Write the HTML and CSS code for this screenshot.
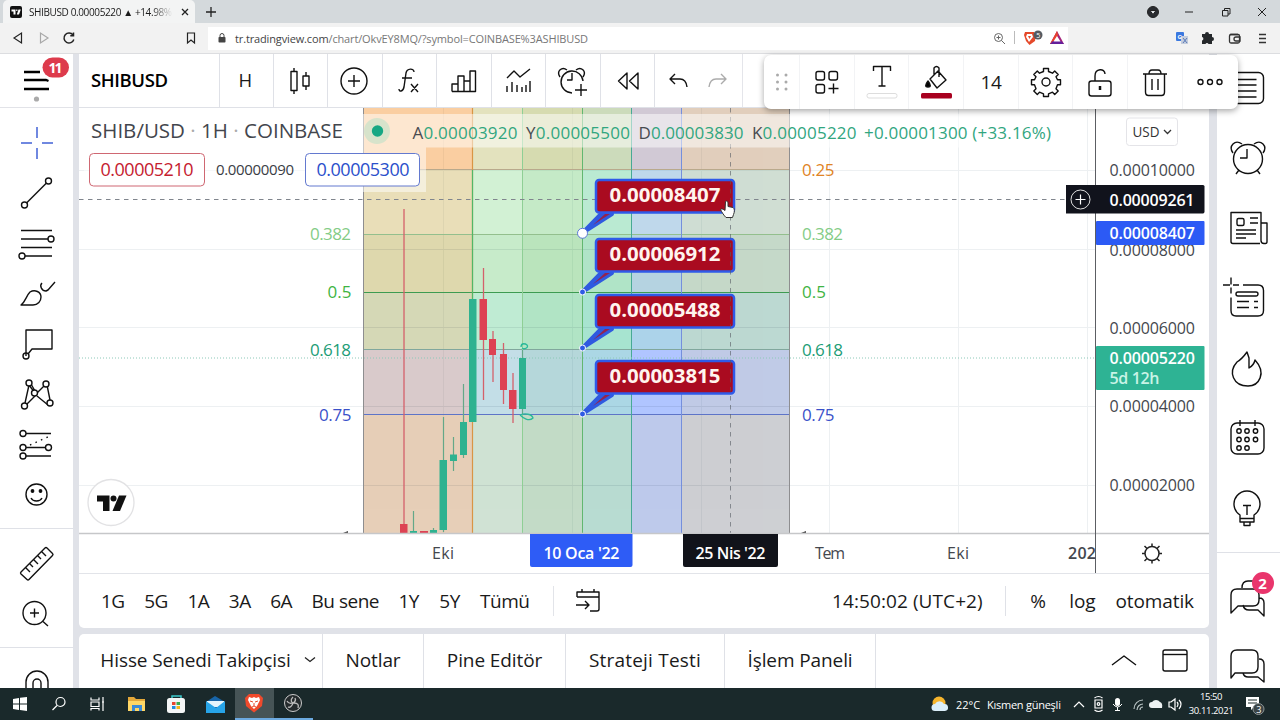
FILE: index.html
```html
<!DOCTYPE html>
<html lang="tr">
<head>
  <meta charset="UTF-8">
  <meta name="viewport" content="width=device-width, initial-scale=1.0">
  <title>SHIBUSD 0.00005220 ▲ +14.98%</title>
  <link rel="stylesheet" href="styles.css">
</head>
<body>
  <div class="tab-strip">
    <div class="tab">
      <svg class="favicon" viewBox="0 0 12 12"><rect width="12" height="12" rx="2" fill="#111"/><path fill="#fff" d="M1.5 3.5h4v5h-2v-3h-2zM6.200 3.500h1.200v1.600H6.200zM8.500 3.500h2.300L9 8.500H6.800z"/></svg>
      <span class="tab-title">SHIBUSD 0.00005220 ▲ +14.98%</span>
      <svg class="tab-close" viewBox="0 0 8 8"><path d="M1 1l6 6M7 1L1 7" stroke="#222" stroke-width="1.300"/></svg>
    </div>
    <svg class="new-tab" viewBox="0 0 10 10"><path d="M5 0v10M0 5h10" stroke="#222" stroke-width="1.300"/></svg>
    <div class="window-buttons">
      <svg viewBox="-10 -10 20 20"><circle r="5.500" fill="#292c30"/><path d="M-3-1.500h6L0 2.500z" fill="#dfe3e6"/></svg>
      <svg viewBox="-10 -10 20 20"><path d="M-4 0h8"/></svg>
      <svg viewBox="-10 -10 20 20"><path d="M-3.500-1.500h5.500v5.500h-5.500zM-1.500-1.500v-2h5.500v5.500h-2"/></svg>
      <svg viewBox="-10 -10 20 20"><path d="M-4-4l8 8M4-4l-8 8"/></svg>
    </div>
  </div>

  <div class="address-row">
    <svg class="nav-icon" viewBox="-8 -8 16 16"><path d="M3.500-5v10L-4 0z"/></svg>
    <svg class="nav-icon faded" viewBox="-8 -8 16 16"><path d="M-3.500-5v10L4 0z"/></svg>
    <svg class="nav-icon" viewBox="-8 -8 16 16"><path d="M4-3A5 5 0 1 0 4.800 1.500M4.500-5.500v3.200H1.300" stroke-width="1.500"/></svg>
    <svg class="nav-icon bookmark" viewBox="-8 -8 16 16"><path d="M-3.500-5h7V5L0 2-3.500 5z"/></svg>
    <div class="url-box">
      <svg class="lock" viewBox="0 0 8 10"><path d="M2 4V2.500a2 2 0 0 1 4 0V4" fill="none" stroke="#444"/><rect x=".5" y="4" width="7" height="5.500" rx=".8" fill="#444"/></svg>
      <span class="url">tr.tradingview.com<i>/chart/OkvEY8MQ/?symbol=COINBASE%3ASHIBUSD</i></span>
      <svg class="url-icons" viewBox="988 28 80 20">
        <g fill="none" stroke="#666"><circle cx="998.500" cy="37.500" r="4"/><path d="M1001.500 40.500l3.500 3.500M996.500 37.500h4M998.500 35.500v4"/><path d="M1014.500 31v13" stroke="#bbb"/></g>
        <path d="M1025 32h9l2 3-1 6-5.500 4-3.500-4-2-6z" fill="#e5492a"/><path d="M1027 34h5l1 3-4 5-3-5z" fill="#fff"/><path d="M1028 36l1.500 3 1.500-3z" fill="#e5492a"/>
        <circle cx="1038" cy="35" r="4.500" fill="#555b61"/><text x="1036.200" y="37.800" class="shield-count">5</text>
        <path d="M1057 31l7 13h-14z" fill="#a3237a"/><path d="M1057 31l-7 13h4l4-9z" fill="#e9422d"/><path d="M1050 44l3-3h8l3 3z" fill="#64209b"/><path d="M1057 36l3.500 5.500h-7z" fill="#fff"/>
      </svg>
    </div>
    <svg class="ext-icons" viewBox="1170 28 110 20">
      <rect x="1176" y="32" width="8" height="9" rx="1" fill="#3b79e0"/><rect x="1181" y="36" width="7" height="8" fill="#c4cddd"/><path d="M1183 38l4 5M1187 38l-4 5" stroke="#5979b8"/><text x="1177.500" y="39" class="translate-g">G</text>
      <path d="M1202 34h3a2 2 0 0 1 4 0h3v3a2 2 0 0 1 0 4v3h-3.500a1.600 1.600 0 0 0-3 0H1202v-3.500a1.800 1.800 0 0 0 0-3.500z" fill="#26292c"/>
      <g fill="none" stroke="#333" stroke-width="1.300"><rect x="1229.500" y="34.500" width="10" height="8.500" rx="1.500"/><path d="M1230 34.500h8M1240 37h-4a1.800 1.800 0 0 0 0 4h4z"/><path d="M1259 34.500h7M1259 38.500h7M1259 42.500h7"/></g>
    </svg>
  </div>

  <div class="workspace">
    <div class="left-bar">
      <div class="menu-cell">
        <svg viewBox="0 54 73 53">
          <path d="M24 72h16M24 80h22l2.500 1M24 89h25" fill="none" stroke="#000" stroke-width="2.300"/>
          <rect x="42.500" y="57.500" width="26.500" height="20" rx="10" fill="#dd3b4c"/>
          <text x="48.500" y="73" textLength="14" class="menu-count">11</text>
          <circle cx="36.500" cy="99" r="2.600" fill="#aaa"/>
        </svg>
      </div>
      <div class="tools">
        <svg class="icon" viewBox="-20 -20 40 40"><path d="M0-16v11M0 5v11M-16 0h11M5 0h11" stroke="#4261d6" stroke-width="1.500"/></svg>
        <svg class="icon" viewBox="-20 -20 40 40"><path d="M-10.500 10L9.500-10"/><circle cx="-12.500" cy="12" r="3"/><circle cx="11.500" cy="-12" r="3"/></svg>
        <svg class="icon" viewBox="-20 -20 40 40"><path d="M-16-13.500h31M-16-5H11M-16 3.500h31M-12 12h27"/><circle cx="14" cy="-5" r="3"/><circle cx="-15" cy="12" r="3"/></svg>
        <svg class="icon" viewBox="-20 -20 40 40"><path d="M-16 11c5-4 5-9 9-13 5-3 11 0 11 5 0 4-3 8-8 8zM5-11c-3 3 0 8 4 8l2-1 7-8"/></svg>
        <svg class="icon" viewBox="-20 -20 40 40"><path d="M-11 12v-26h26v19H-5l-4 5"/><circle cx="-11" cy="12" r="3"/></svg>
        <svg class="icon" viewBox="-20 -20 40 40"><path d="M-12 9l4-18M-8-9l6 8M7-8L0-1M10-9l3 15M-2 2l-9 9M0 2l11 9M-6-10l4 7"/><g fill="#fff"><circle cx="-8" cy="-11" r="3"/><circle cx="9" cy="-10" r="3"/><circle cx="-2.500" cy="-1" r="3"/><circle cx="-12.500" cy="12" r="3"/><circle cx="13" cy="9" r="3"/></g></svg>
        <svg class="icon" viewBox="-20 -20 40 40"><path d="M-11-11.500h25M-11 2.500h20M-11 11h25"/><path d="M-7 0L13-9" stroke-dasharray="1.500 4.500"/><circle cx="-14" cy="-11.500" r="3"/><circle cx="-14" cy="2.500" r="3"/><circle cx="-14" cy="11" r="3"/><circle cx="11.500" cy="2.500" r="3"/></svg>
        <svg class="icon" viewBox="-20 -20 40 40"><circle cx="-.5" cy="-.5" r="10.500"/><path d="M-6 3c2 4 9 4 11 0"/><circle cx="-4.500" cy="-4" r="1.200" fill="#000"/><circle cx="3.500" cy="-4" r="1.200" fill="#000"/></svg>
      </div>
      <div class="tools tools-measure">
        <svg class="icon" viewBox="-20 -20 40 40"><path d="M-16 8L8-16q1-1 2 0l5.500 5.500q1 1 0 2L-8 15.500q-1 1-2 0L-16 10q-1-1 0-2zM-11 4l4 4M-7 0l3 3M-3-4l4 4M1-8l3 3M5-12l4 4"/></svg>
        <svg class="icon" viewBox="-20 -20 40 40"><circle cx="-2.500" cy="-1" r="11.500"/><path d="M-7-1h9M-2.500-5.500v9M6 7.500l5 4.500"/></svg>
      </div>
      <div class="tools tools-magnet">
        <svg class="icon" viewBox="-20 -20 40 40"><path d="M-11 20V-1a11 11 0 0 1 22 0v21M-4 20V0a4 4 0 0 1 8 0v20"/></svg>
      </div>
    </div>

    <div class="center">
      <div class="top-panel">
        <div class="top-bar">
          <div class="symbol">SHIBUSD</div>
          <div class="cell interval">H</div>
          <div class="cell"><svg class="icon" viewBox="-20 -20 40 40"><path d="M-9-9.500h6v19h-6zM-6-13v3M-6 10v3M3-5h6v10H3zM6-9v4M6 5v4"/></svg></div>
          <div class="cell"><svg class="icon" viewBox="-19 -20 40 40"><circle r="13"/><path d="M-6 0H6M0-6V6"/></svg></div>
          <div class="cell"><svg class="icon" viewBox="-20 -20 40 40"><path d="M5-9c0-4-7-4-8 1L-5 6c-1 5-5 5-5 2M-7-3H3M2 3l7 8M9 3l-7 8"/></svg></div>
          <div class="cell"><svg class="icon" viewBox="-20 -20 40 40"><path d="M-12 10.500V3h6v7.500M-6 3V-5H0v15.500M0 0h6M6 10.500V-10h5.500v20.500zM-12 10.500h23"/></svg></div>
          <div class="cell"><svg class="icon" viewBox="-20 -20 40 40"><path d="M-11-3l7-7 6 6 10-8M-11 5v6M-6 1v10M-1 4v7M4 6v5M8 4v7M12 0v11"/></svg></div>
          <div class="cell"><svg class="icon" viewBox="-19 -20 40 40"><path d="M0 12A11 11 0 1 1 11 0M-12-4c-4-6 2-11 7-7M11-4c4-6-2-11-7-7M0-8v7h-5M9 3v12M3 9h12"/></svg></div>
          <div class="cell"><svg class="icon" viewBox="-21 -20 40 40"><path d="M-1-8v16l-8.500-8zM10-8v16L1.500 0z"/></svg></div>
          <div class="cell undo-cell">
            <svg class="icon" viewBox="-19 -20 40 40"><path d="M-3-7l-5 5 5 5M-8-2H2q6 0 7 8"/></svg>
            <svg class="icon faded" viewBox="-19 -20 40 40"><path d="M3-7l5 5-5 5M8-2H-2q-6 0-7 8"/></svg>
          </div>
        </div>

        <svg class="chart" viewBox="79 108 1130 465">
          <!-- grid -->
          <path d="M79 170.500h1016M79 249.500h1016M79 327.500h1016M79 406.500h1016M79 485.500h1016M443.500 108v425M572.500 108v425M701.500 108v425M829.500 108v425M958.500 108v425M1087.500 108v425" stroke="#edf0f2"/>

          <!-- fibonacci price rows -->
          <g opacity=".2">
            <path fill="#f57c00" d="M363 108h427v61.500H363z"/>
            <path fill="#85db8d" d="M363 169.500h427V234H363z"/>
            <path fill="#44b84a" d="M363 234h427v58H363z"/>
            <path fill="#10b981" d="M363 292h427v57.500H363z"/>
            <path fill="#2962ff" d="M363 349.500h427v65H363z"/>
            <path fill="#787b86" d="M363 414.500h427V533H363z"/>
          </g>
          <!-- fibonacci time columns -->
          <g opacity=".2">
            <path fill="#f57c00" d="M363 108h109.500v425H363z"/>
            <path fill="#85db8d" d="M472.500 108h50v425h-50z"/>
            <path fill="#44b84a" d="M522.500 108h60v425h-60z"/>
            <path fill="#10b981" d="M582.500 108h49v425h-49z"/>
            <path fill="#2962ff" d="M631.500 108H681v425h-49.500z"/>
            <path fill="#787b86" d="M681 108h109v425H681z"/>
          </g>
          <path d="M363 249.500h427M363 327.500h427M363 406.500h427M363 485.500h427" stroke="#667" opacity=".06"/>
          <g fill="none" stroke-width="1">
            <path d="M363 169.500h427" stroke="#b9a98c"/>
            <path d="M363 234.500h427" stroke="#93bf8d"/>
            <path d="M363 292.500h427" stroke="#3d9b51"/>
            <path d="M363 349.500h427" stroke="#81a79d"/>
            <path d="M363 414.500h427" stroke="#5d74c8"/>
            <path d="M363.500 108v425M789.500 108v425" stroke="#8e8e90"/>
            <path d="M472.500 108v425" stroke="#d99545" stroke-width="1.200"/>
            <path d="M472.500 170v129" stroke="#51b767" stroke-width="1.200"/>
            <path d="M522.500 108v425" stroke="#8fcf95"/>
            <path d="M582.500 108v425" stroke="#62b770"/>
            <path d="M631.500 108v425" stroke="#48a995"/>
            <path d="M681.500 108v425" stroke="#758fdc"/>
          </g>

          <path d="M79 358h1016" stroke="#8cc9b8" stroke-dasharray="1 2"/>
          <path d="M79 199.500h987" stroke="#80858d" stroke-dasharray="4.500 4.500"/>

          <!-- candles -->
          <path d="M404 209v325M483.500 268v132M493 331v51M503.500 343v61M513 373v50" stroke="#d4606b" stroke-width="1.300"/>
          <path d="M413.500 511v22M433.500 528v5M443.500 417v115M453.500 437v34M463.500 384v74M522.500 350v64" stroke="#64a888" stroke-width="1.200"/>
          <path fill="#dd4253" d="M400 524h7.500v10H400zM420 531h8v3h-8zM479.500 299h7.500v41h-7.500zM489 339h7v16h-7zM500 354h7v36h-7zM509 390h7.500v19H509z"/>
          <path fill="#2eb290" d="M410 531h7v3h-7zM430 530h7v4h-7zM439.500 460h7.500v70h-7.500zM450 454.500h7v6.500h-7zM460 422h7v33h-7zM469 299h7.500v123H469zM519 358h7v51h-7z"/>
          <path d="M521 347c0-5 5-3 6-2 2 2-2 5-5 3M520 415c5-2 12-1 13 3-4 4-10 0-13-3" fill="none" stroke="#2ab99a" stroke-width="1.300"/>

          <!-- price callouts -->
          <g class="callout">
            <path class="tail" d="M583 232.500L601 214h11z"/><path d="M593 225l12-11h5z" fill="#94234f"/>
            <rect x="596" y="180" width="138" height="32.500" rx="3"/><text x="609.500" y="201.500" textLength="111" lengthAdjust="spacingAndGlyphs">0.00008407</text>
            <circle cx="582.500" cy="233.300" r="5" fill="#fff" stroke="#5c78d8"/>
          </g>
          <g class="callout">
            <path class="tail" d="M583 291.500L601 273h11z"/><path d="M593 284l12-11h5z" fill="#94234f"/>
            <rect x="596" y="239" width="138" height="32.500" rx="3"/><text x="609.500" y="260.500" textLength="111" lengthAdjust="spacingAndGlyphs">0.00006912</text>
            <circle cx="582.500" cy="292" r="3" fill="#2f5be4" stroke="#fff"/>
          </g>
          <g class="callout">
            <path class="tail" d="M583 347.500L601 329h11z"/><path d="M593 340l12-11h5z" fill="#94234f"/>
            <rect x="596" y="295" width="138" height="32.500" rx="3"/><text x="609.500" y="316.500" textLength="111" lengthAdjust="spacingAndGlyphs">0.00005488</text>
            <circle cx="582.500" cy="348" r="3" fill="#2f5be4" stroke="#fff"/>
          </g>
          <g class="callout">
            <path class="tail" d="M583 413.500L601 395h11z"/><path d="M593 406l12-11h5z" fill="#94234f"/>
            <rect x="596" y="361" width="138" height="32.500" rx="3"/><text x="609.500" y="382.500" textLength="111" lengthAdjust="spacingAndGlyphs">0.00003815</text>
            <circle cx="582.500" cy="414" r="3" fill="#2f5be4" stroke="#fff"/>
          </g>
          <path d="M730.500 108v425" stroke="#555b62" stroke-dasharray="4.500 4.500" opacity=".6"/>

          <!-- level names -->
          <g class="levels">
            <text x="310" y="240" textLength="41" fill="#84cc86">0.382</text><text x="802" y="240" textLength="41" fill="#84cc86">0.382</text>
            <text x="327.500" y="298" textLength="24" fill="#3fb443">0.5</text><text x="802" y="298" textLength="24" fill="#3fb443">0.5</text>
            <text x="310" y="356" textLength="41" fill="#219d76">0.618</text><text x="802" y="356" textLength="41" fill="#219d76">0.618</text>
            <text x="319" y="420.500" textLength="32.500" fill="#3a51c9">0.75</text><text x="802" y="420.500" textLength="32.500" fill="#3a51c9">0.75</text>
            <text x="802" y="175.500" textLength="32.500" fill="#e08425">0.25</text>
          </g>

          <!-- legend -->
          <path d="M84 114h970v33.500H426V192H84z" fill="#fff" opacity=".5"/>
          <text x="91" y="138" textLength="252" lengthAdjust="spacingAndGlyphs" class="legend-title">SHIB/USD <tspan fill="#aaa">·</tspan> 1H <tspan fill="#aaa">·</tspan> COINBASE</text>
          <circle cx="377" cy="131" r="13" fill="#d7e3cb"/><circle cx="377.500" cy="131" r="5.700" fill="#15a783"/>
          <g class="ohlc">
            <text x="412.500" y="139" textLength="105">A<tspan>0.00003920</tspan></text>
            <text x="526" y="139" textLength="104">Y<tspan>0.00005500</tspan></text>
            <text x="638.500" y="139" textLength="105">D<tspan>0.00003830</tspan></text>
            <text x="752" y="139" textLength="104.500">K<tspan>0.00005220</tspan></text>
            <text x="864" y="139" textLength="187"><tspan>+0.00001300 (+33.16%)</tspan></text>
          </g>
          <rect x="89.500" y="153.500" width="115" height="32.500" rx="4" fill="#fff" stroke="#cf6772"/>
          <text x="100.500" y="176" textLength="93" fill="#c5202f" class="quote">0.00005210</text>
          <text x="216" y="175" textLength="78" fill="#3a3d45" class="spread">0.00000090</text>
          <rect x="305.500" y="153.500" width="114" height="32.500" rx="4" fill="#fff" stroke="#6379cf"/>
          <text x="316.500" y="176" textLength="93" fill="#2b4fcb" class="quote">0.00005300</text>

          <circle cx="111" cy="502.500" r="23" fill="#fff" stroke="#e2e2e4" stroke-width="1.300"/>
          <path d="M97 495.500h12.500V511H103v-9.500h-6z" fill="#111"/><circle cx="113.500" cy="498.500" r="3" fill="#111"/><path d="M119 495.500h7.500L120 511h-7.500z" fill="#111"/>
          <path d="M343 533l5-2v2zM801 533l5-2v2z" fill="#444"/>

          <!-- axes -->
          <path d="M79 533.500h1130" stroke="#c6c7c9" stroke-width="1.400"/>
          <path d="M1095.500 108v465" stroke="#5c5e63"/>
          <g class="axis-text">
            <text x="1109.500" y="176" textLength="85.500">0.00010000</text>
            <text x="1109.500" y="255.500" textLength="85.500">0.00008000</text>
            <text x="1109.500" y="333.500" textLength="85.500">0.00006000</text>
            <text x="1109.500" y="412" textLength="85.500">0.00004000</text>
            <text x="1109.500" y="491" textLength="85.500">0.00002000</text>
            <text x="432" y="559" textLength="22">Eki</text>
            <text x="815" y="559" textLength="30">Tem</text>
            <text x="947" y="559" textLength="22">Eki</text>
            <text x="1068" y="559" textLength="28" class="year">202</text>
          </g>
          <rect x="1126.500" y="118" width="51" height="27.500" rx="3" fill="#fff" stroke="#e4e4e8"/>
          <text x="1132.500" y="137" textLength="27" lengthAdjust="spacingAndGlyphs" class="currency">USD</text><path d="M1164 130l3.500 3.500 3.500-3.500" fill="none" stroke="#333" stroke-width="1.300"/>

          <g class="badges">
            <path fill="#11131c" d="M1066 185h137q1.500 0 1.500 1.500v25q0 2-1.500 2h-137z"/>
            <circle cx="1080.500" cy="199.500" r="9.500" fill="none" stroke="#ddd"/><path d="M1075.500 199.500h10M1080.500 194.500v10" stroke="#fff" stroke-width="1.200"/>
            <text x="1109.500" y="205.500" textLength="85">0.00009261</text>
            <rect x="1096" y="221" width="108.500" height="24" rx="1" fill="#2c5af5"/>
            <text x="1109.500" y="239" textLength="85.500">0.00008407</text>
            <rect x="1096" y="346" width="108.500" height="44" rx="1" fill="#2eb394"/>
            <text x="1109.500" y="364" textLength="85.500">0.00005220</text>
            <text x="1109.500" y="384" textLength="50" class="countdown">5d 12h</text>
            <path fill="#2e5cf6" d="M530 534h102.500v31q0 2-2 2H532q-2 0-2-2z"/>
            <text x="543.500" y="559" textLength="76">10 Oca '22</text>
            <path fill="#11131a" d="M683 534h95v31q0 2-2 2h-91q-2 0-2-2z"/>
            <text x="695.500" y="559" textLength="70">25 Nis '22</text>
          </g>
          <g fill="none" stroke="#222" stroke-width="1.500"><circle cx="1152" cy="553.500" r="7"/><path d="M1152 546.500v-3M1152 560.500v3M1145 553.500h-3M1159 553.500h3M1147 548.500l-2.500-2.500M1157 548.500l2.500-2.500M1147 558.500l-2.500 2.500M1157 558.500l2.500 2.500"/></g>

          <!-- hand cursor -->
          <path d="M725.500 201.500c1.500-1 2.500 0 2.500 1.500v3.500l5 1c2 1 1.500 5 .5 7l-1 3h-6.500c-2-2-4-5-5.500-8 1-1 2.500-.5 4.500 1z" fill="#fff" stroke="#333"/>
        </svg>

        <div class="range-bar">
          <span>1G</span><span>5G</span><span>1A</span><span>3A</span><span>6A</span><span class="this-year">Bu sene</span><span>1Y</span><span>5Y</span><span class="all">Tümü</span>
          <div class="goto"><svg class="icon" viewBox="-20 -20 40 40"><path d="M-11-4v-5h22V8q0 2-2 2H2M-11-4h22M-6-12v3M6-12v3M-12 4H1M-3 0l4 4-4 4"/></svg></div>
          <span class="clock">14:50:02 (UTC+2)</span>
          <div class="scale-modes"><span class="percent">%</span><span>log</span><span>otomatik</span></div>
        </div>
      </div>

      <div class="bottom-tabs">
        <div class="bottom-tab screener">Hisse Senedi Takipçisi <svg viewBox="0 0 12 8"><path d="M1 1.500l5 4 5-4" fill="none" stroke="#222" stroke-width="1.300"/></svg></div>
        <div class="bottom-tab notes">Notlar</div>
        <div class="bottom-tab pine">Pine Editör</div>
        <div class="bottom-tab strategy">Strateji Testi</div>
        <div class="bottom-tab trading">İşlem Paneli</div>
        <div class="panel-buttons">
          <svg class="icon" viewBox="-20 -20 40 40"><path d="M-12 4L0-5 12 4"/></svg>
          <svg class="icon" viewBox="-20 -20 40 40"><rect x="-12" y="-11" width="24" height="21" rx="2"/><path d="M-12-6.500h24"/></svg>
        </div>
      </div>
    </div>

    <div class="right-bar">
      <div class="widgets">
        <svg class="icon" viewBox="-20 -20 40 40"><rect x="-16" y="-15.500" width="32.500" height="31" rx="5"/><path d="M-10-8.500H9.500M-10-3H9.500M-10 3H9.500M-10 9H9.500"/></svg>
        <svg class="icon" viewBox="-20 -20 40 40"><circle cx="1" cy="1" r="14.500"/><path d="M0-9V0h-7M-14-5c-5-7 2-14 9-9M16-5c5-7-2-14-9-9M-8 12l-3 4M10 12l3 4"/></svg>
        <svg class="icon" viewBox="-20 -20 40 40"><path d="M13 15.500h-27q-2 0-2-2V-15.500h30v28q0 3 3 3h1.500q1.500 0 1.500-2V-5h-6M3-10h8M3-5h8M-11 2H9M-11 6H9M-11 10h10"/><rect x="-10" y="-9.500" width="7" height="7" rx="1.500"/></svg>
        <svg class="icon" viewBox="-20 -18.500 40 40"><path d="M-16-20v7M-16-10v6M-24-12.500h7M-14-12.500h6M-4-12.500H11q5.500 0 5.500 5.500V13q0 5.500-5.500 5.500H-11Q-16 18.500-16 13V0M-10 4H2M-10 10H2M7 4h4M7 10h4"/><rect x="-11" y="-5.500" width="22" height="4" rx="2"/></svg>
        <svg class="icon" viewBox="-20 -20 40 40"><path d="M-10-7Q-5-10 0-17l2 6v10q5-3 6-8c12 13 4 26-7 26-15 0-20-14-11-24z"/></svg>
        <svg class="icon" viewBox="-20 -18 40 40"><rect x="-16" y="-14" width="33" height="31" rx="6"/><path d="M-7-17v6M8-17v6"/><circle cx="-8" cy="-6" r="2.200"/><circle cx="0" cy="-6" r="2.200"/><circle cx="8.500" cy="-6" r="2.200"/><circle cx="-8" cy="2.500" r="2.200"/><circle cx="0" cy="2.500" r="2.200"/><circle cx="8.500" cy="2.500" r="2.200"/><circle cx="-8" cy="11" r="2.200"/><circle cx="0" cy="11" r="2.200"/></svg>
        <svg class="icon" viewBox="-20 -20 40 40"><path d="M-7 6A13 13 0 1 1 7 6v7H-7zM-7 9.500H7M-3 13v3.500h6V13M0 6V-3.500M-4-3.500h8"/></svg>
      </div>
      <div class="chats">
        <div class="chat-cell">
          <svg class="icon" viewBox="-20 -18 40 40"><path d="M-11 12l-5 5V-1q0-6 6-6H6q6 0 6 6v5q0 6-6 6h-15zM12 2q5 0 5 5v13l-6-6H2q-5 0-6-5M-5-8q0-7 6-7h9"/></svg>
          <b class="chat-count">2</b>
        </div>
        <svg class="icon" viewBox="-20 -20 40 40"><path d="M-12 8l-4 5V-9q0-6 6-6H5q6 0 6 6V2q0 6-6 6zM12-6q5 0 5 5v18l-6-5H1q-4 0-5-4"/></svg>
      </div>
    </div>

    <div class="floating-bar">
      <div class="grip"><svg class="icon" viewBox="-20 -20 40 40"><g fill="#aaa" stroke="none"><circle cx="-4.500" cy="-7" r="1.500"/><circle cx="4" cy="-7" r="1.500"/><circle cx="-4.500" cy="0" r="1.500"/><circle cx="4" cy="0" r="1.500"/><circle cx="-4.500" cy="7" r="1.500"/><circle cx="4" cy="7" r="1.500"/></g></svg></div>
      <div><svg class="icon" viewBox="-20 -20 40 40"><rect x="-11" y="-10.500" width="8.500" height="8.500" rx="2"/><rect x="2" y="-10.500" width="8.500" height="8.500" rx="2"/><rect x="-11" y="2.500" width="8.500" height="8.500" rx="2"/><path d="M1.500 6.500h10M6.500 1.500v10"/></svg></div>
      <div><svg class="icon" viewBox="-20 -20 40 40"><path d="M-8.500-11v-4.500h17v4.500M0-15.500V4M-3.500 4h7"/><rect x="-15" y="11.500" width="30" height="4.500" rx="2" stroke="#ddd" stroke-width="1"/></svg></div>
      <div><svg class="icon" viewBox="-20 -20 40 40"><path d="M-6-3L2-11l8 9L1 6zM-2-7v-7q2.500-3 5 0v9"/><path d="M-8-1c-3 4-3 6 0 6s3-2 0-6z" fill="#000"/><rect x="-15" y="11" width="31" height="5.500" rx="1.500" fill="#a8001f" stroke="none"/></svg></div>
      <div class="font-size">14</div>
      <div><svg class="icon" viewBox="-20 -20 40 40"><path d="M-2.500-13.500h5v3l4 1.700 2.200-2.200 3.500 3.500-2.200 2.200 1.500 3h3v5h-3l-1.500 4 2.200 2.200-3.500 3.500-2.200-2.200-4 1.700v2.600h-5v-2.600l-4-1.700-2.200 2.200-3.500-3.500 2.200-2.200-1.500-4h-3v-5h3l1.500-3-2.200-2.200 3.500-3.500 2.200 2.200 4-1.700z"/><circle r="4"/></svg></div>
      <div><svg class="icon" viewBox="-20 -20 40 40"><rect x="-11" y="-1" width="22" height="15" rx="2.500"/><path d="M-5-1v-5c0-8 10-8 10-2"/><path d="M0 4v4" stroke-width="2.500"/></svg></div>
      <div><svg class="icon" viewBox="-20 -20 40 40"><path d="M-12-8h24M-6-8q0-4 3-4h6q3 0 3 4M-9.500-8V10q0 3.500 3 3.500h13q3 0 3-3.500V-8M-3-3V8M3-3V8"/></svg></div>
      <div class="more"><svg class="icon" viewBox="-20 -20 40 40"><circle cx="-9.500" r="2.500"/><circle r="2.500"/><circle cx="9.500" r="2.500"/></svg></div>
    </div>
  </div>

  <div class="taskbar">
    <div class="task"><svg viewBox="-10 -10 20 20"><path fill="#fff" d="M-7-5l6-1v5.500h-6zM0-6.200L7-7v6.500H0zM-7 .5h6V6l-6-1zM0 .5h7V7L0 6z"/></svg></div>
    <div class="task"><svg viewBox="-10 -10 20 20"><g fill="none" stroke="#fff" stroke-width="1.200"><circle cx="1.500" cy="-2" r="4.500"/><path d="M-2 1.500L-6.500 6"/></g></svg></div>
    <div class="task"><svg viewBox="-10 -10 20 20"><path fill="none" stroke="#fff" stroke-width="1.200" d="M-7-6.500v2.500h8v-2.500M-7-2h8v4.500h-8zM-7 6.500V4.500h8v2M5-7v14M4-2h2"/></svg></div>
    <div class="task"><svg viewBox="-10 -10 20 20"><path fill="#e4a83a" d="M-9-7h6l2 2H8V6H-9z"/><path fill="#ffd766" d="M-9-3H8v10H-9z"/><path fill="#3b8bd8" d="M-5 1H5v6H2V4h-4v3h-3z"/></svg></div>
    <div class="task"><svg viewBox="-10 -10 20 20"><path fill="none" stroke="#3cc9cc" stroke-width="1.500" d="M-4-4v-4h9v4"/><rect x="-9" y="-6" width="18" height="15" rx="2.500" fill="#f4f6f6"/><path fill="#e8452e" d="M-4-2h3.500v3H-4z"/><path fill="#3aab4c" d="M.5-2H4v3H.5z"/><path fill="#218ae0" d="M-4 2h3.500v3H-4z"/><path fill="#f6b81a" d="M.5 2H4v3H.5z"/></svg></div>
    <div class="task"><svg viewBox="-10 -10 20 20"><path fill="#1865a8" d="M-9-2L0-8l10 6v11H-9z"/><path fill="#e4f4fc" d="M-8-3H9v6H-8z"/><path fill="#27a4e8" d="M-9-3L1 4l9-7V9H-9z"/></svg></div>
    <div class="task active"><svg viewBox="-10 -10 20 20"><path fill="#f04a2c" d="M-5-9H5l4 4-1 8-8 6.500L-8 3l-1-8z"/><path fill="#fff" d="M-5-6l3 1 2-1 2 1 3-1 1 3-3 6-3 3-3-3-3-6z"/><path d="M-4-2l3 1M4-2L1-1M0 0v3M-2 4l2-1 2 1" stroke="#e4492c" fill="none"/></svg></div>
    <div class="task open"><svg viewBox="-10 -10 20 20"><circle r="8.500" fill="#252b2d" stroke="#ccc"/><path d="M0-6c-3 3-2 6 1 6 4 0 5 2 4 5M0 0c-3 1-5 0-6-2M0 0c-1 3-3 5-5 4M0 0c2-1 3-3 2-5" fill="none" stroke="#bbb" stroke-width="1.300"/></svg></div>
    <div class="tray">
      <svg class="weather" viewBox="-10 -10 20 20"><circle cx="-1" cy="-1" r="6.500" fill="#f7b52d"/><path fill="#dceffa" d="M-5 7a3.500 3.500 0 0 1 0-7 5 5 0 0 1 9 0 3.500 3.500 0 0 1 1 7z"/></svg>
      <span class="temp">22°C</span><span class="sky">Kısmen güneşli</span>
      <svg class="tray-icons" viewBox="1070 694 115 20">
        <g fill="none" stroke="#fff" stroke-width="1.200"><path d="M1074 707l5-5 5 5M1095 700h7v8h-7zM1094.500 698q4-3 8 0M1094.500 710q4 3 8 0"/><circle cx="1098.500" cy="704" r="1.300"/><path d="M1134 709a9 9 0 0 1 9-9M1137 710a6 6 0 0 1 6-6M1140 710a3 3 0 0 1 3-3" stroke="#b7c2c3"/><path d="M1169 702h2l4-3v11l-4-3h-2zM1177 702q2 2 0 5M1179 700q4 4 0 9"/></g>
        <rect x="1115" y="698" width="5" height="8" rx="2.500" fill="#fff"/><path d="M1113 704q4.500 6 9 0M1117.500 707v3M1115 710.500h5" fill="none" stroke="#fff"/>
        <path fill="#eef2f3" d="M1152 708a3 3 0 0 1 0-6 5 5 0 0 1 8 0q3 1 2 6z"/>
      </svg>
      <div class="datetime"><span>15:50</span><span>30.11.2021</span></div>
      <svg class="notify" viewBox="-14 -12 28 24"><path fill="#fff" d="M-8-7H5V3H0l-3 3V3h-5z"/><path d="M-6-4H3M-6-1H3" stroke="#1b2a2b"/><circle cx="4.500" cy="5" r="5.500" fill="#3c4547" stroke="#8c9495"/><text x="2.200" y="8.500" class="notify-count">3</text></svg>
    </div>
  </div>
</body>
</html>
```
FILE: styles.css
```css
* {
  box-sizing: border-box;
}
body {
  margin: 0;
  width: 1280px;
  height: 720px;
  overflow: hidden;
  display: flex;
  flex-direction: column;
  font-family: "Open Sans", "Noto Sans", sans-serif;
  color: #1a1a1a;
  background: #fff;
}
svg {
  display: block;
  flex: none;
}
.icon {
  width: 40px;
  height: 40px;
  overflow: visible;
  fill: none;
  stroke: #111;
  stroke-width: 1.4;
  stroke-linejoin: round;
}
.faded {
  opacity: .35;
}

/* browser */
.tab-strip {
  height: 23px;
  background: #d4d9dc;
  display: flex;
  align-items: center;
  padding-left: 3px;
}
.tab {
  width: 192px;
  height: 23px;
  padding: 0 6px 0 7px;
  display: flex;
  align-items: center;
  background: #f3f4f4;
  border-radius: 5px 5px 0 0;
}
.favicon {
  width: 12px;
  height: 12px;
  margin-right: 7px;
}
.tab-title {
  width: 144px;
  font-size: 10px;
  letter-spacing: -.38px;
  white-space: nowrap;
  overflow: hidden;
  -webkit-mask-image: linear-gradient(to right, #000 85%, transparent);
}
.tab-close {
  width: 8px;
  height: 8px;
  margin-left: auto;
}
.new-tab {
  width: 10px;
  height: 10px;
  margin-left: 11px;
}
.window-buttons {
  display: flex;
  gap: 16.5px;
  margin-left: auto;
  padding-right: 8px;
}
.window-buttons svg {
  width: 20px;
  height: 20px;
  fill: none;
  stroke: #222;
}
.address-row {
  height: 31px;
  background: #f2f2f2;
  border-bottom: 1px solid #dcdde0;
  display: flex;
  align-items: center;
  padding-left: 10px;
}
.nav-icon {
  width: 16px;
  height: 16px;
  margin-right: 9.5px;
  fill: none;
  stroke: #222;
  stroke-width: 1.2;
}
.bookmark {
  margin-left: 96px;
}
.url-box {
  width: 860px;
  height: 23px;
  display: flex;
  align-items: center;
  background: #fff;
  padding-left: 10px;
}
.lock {
  width: 8px;
  height: 10px;
  margin-right: 9px;
}
.url {
  font-size: 11px;
  letter-spacing: -.14px;
  color: #444;
  white-space: nowrap;
}
.url i {
  font-style: normal;
  color: #777;
}
.url-icons {
  width: 80px;
  height: 20px;
  margin-left: auto;
}
.shield-count {
  font-size: 7px;
  fill: #fff;
}
.translate-g {
  font-size: 6px;
  font-weight: 700;
  fill: #fff;
}
.ext-icons {
  width: 110px;
  height: 20px;
  margin-left: auto;
}

/* workspace */
.workspace {
  position: relative;
  height: 634px;
  display: flex;
  background: #e0e2e8;
}
.left-bar {
  width: 73px;
  margin-right: 6px;
  background: #fff;
  overflow: hidden;
}
.menu-cell {
  height: 54px;
  border-bottom: 1px solid #e2e3e8;
}
.menu-cell svg {
  width: 73px;
  height: 53px;
}
.menu-count {
  font-size: 14px;
  font-weight: 700;
  fill: #fff;
}
.tools {
  height: 421px;
  padding-top: 15px;
  border-bottom: 1px solid #dfe1e7;
  display: flex;
  flex-direction: column;
  align-items: center;
  gap: 10.3px;
}
.tools-measure {
  height: 119px;
  gap: 10px;
}
.tools-magnet {
  height: 60px;
  border-bottom: 0;
}
.center {
  width: 1130px;
  display: flex;
  flex-direction: column;
  gap: 6px;
}
.top-panel {
  height: 574px;
  background: #fff;
  border-radius: 0 0 5px 5px;
}
.top-bar {
  height: 54px;
  display: flex;
  border-bottom: 1px solid #dfe1e7;
}
.symbol {
  width: 140px;
  padding-left: 12px;
  line-height: 52px;
  font-size: 18.5px;
  font-weight: 600;
  letter-spacing: -.4px;
  color: #000;
}
.cell {
  width: 54.5px;
  border-left: 1px solid #dfe1e7;
  display: flex;
  align-items: center;
  justify-content: center;
}
.interval {
  width: 53.5px;
  padding: 0 2px 2px 0;
  font-size: 18.5px;
}
.undo-cell {
  width: 89px;
  border-right: 1px solid #e4e5ea;
}
.chart {
  width: 1130px;
  height: 465px;
}
.callout text {
  font-size: 19.5px;
  font-weight: 700;
  fill: #fff4ee;
}
.callout rect {
  fill: #aa0b20;
  stroke: #2f5ae8;
  stroke-width: 2.5;
}
.callout .tail {
  fill: #2f5ae0;
  stroke: #2f5ae0;
  stroke-width: 4;
  stroke-linejoin: round;
}
.levels text {
  font-size: 17px;
  font-weight: 500;
}
.legend-title {
  font-size: 20.5px;
  fill: #43464d;
}
.ohlc text {
  font-size: 17px;
  fill: #484b50;
}
.ohlc tspan {
  fill: #31a67f;
}
.quote {
  font-size: 18px;
}
.spread {
  font-size: 15px;
}
.axis-text text {
  font-size: 16px;
  fill: #44474e;
}
.axis-text .year {
  font-weight: 600;
}
.currency {
  font-size: 15px;
  fill: #333;
}
.badges text {
  font-size: 16px;
  font-weight: 600;
  fill: #fff;
}
.badges .countdown {
  fill: #c9f3e6;
}
.range-bar {
  height: 55px;
  border-top: 1px solid #e2e4e9;
  display: flex;
  align-items: center;
  gap: 19.5px;
  padding: 0 15px 0 22px;
  font-size: 19px;
  white-space: nowrap;
  letter-spacing: -.5px;
}
.range-bar > span {
  min-width: 21.3px;
}
.goto {
  height: 30px;
  display: flex;
  align-items: center;
  margin-left: 4px;
  padding-left: 14px;
  border-left: 1px solid #e2e4e9;
}
.clock {
  margin-left: auto;
  letter-spacing: .08px;
}
.scale-modes {
  height: 30px;
  display: flex;
  align-items: center;
  gap: 20px;
  margin-left: 3px;
  padding-left: 24px;
  border-left: 1px solid #dfe1e7;
  letter-spacing: -.1px;
}
.percent {
  width: 19px;
}
.bottom-tabs {
  height: 54px;
  background: #fff;
  border-radius: 5px 5px 0 0;
  display: flex;
  font-size: 19px;
  letter-spacing: -.1px;
}
.bottom-tab {
  display: flex;
  align-items: center;
  justify-content: center;
  padding-bottom: 2px;
  border-right: 1px solid #dfe1e7;
  white-space: nowrap;
}
.bottom-tab svg {
  width: 12px;
  height: 8px;
  margin-left: 13px;
}
.screener {
  width: 244px;
  padding-left: 15px;
}
.notes {
  width: 101px;
}
.pine {
  width: 142px;
}
.strategy {
  width: 159px;
  letter-spacing: .2px;
}
.trading {
  width: 151px;
}
.panel-buttons {
  margin-left: auto;
  display: flex;
  align-items: center;
  gap: 11px;
  padding-right: 14px;
}
.right-bar {
  width: 63px;
  margin-left: 8px;
  background: #fff;
  overflow: hidden;
}
.widgets {
  height: 499px;
  padding-top: 14px;
  padding-right: 4px;
  border-bottom: 1px solid #dfe1e7;
  display: flex;
  flex-direction: column;
  align-items: center;
  gap: 30.2px;
}
.chats {
  padding-top: 25px;
  padding-right: 4px;
  display: flex;
  flex-direction: column;
  align-items: center;
  gap: 27px;
}
.chat-cell {
  position: relative;
}
.chat-count {
  position: absolute;
  left: 25px;
  top: -6px;
  width: 22px;
  height: 22px;
  border-radius: 50%;
  background: #e9356c;
  color: #fff;
  font-size: 15px;
  line-height: 22px;
  text-align: center;
}
.floating-bar {
  position: absolute;
  left: 764px;
  top: 1px;
  width: 474px;
  height: 54px;
  display: flex;
  background: #fff;
  border-radius: 7px;
  box-shadow: 0 2px 6px rgba(0, 0, 0, .35);
}
.floating-bar div {
  flex: none;
  width: 54.7px;
  display: flex;
  align-items: center;
  justify-content: center;
  border-left: 1px solid #f2f3f5;
}
.floating-bar .grip {
  width: 35px;
  border-left: 0;
}
.floating-bar .more {
  width: 56px;
}
.floating-bar .font-size {
  font-size: 19px;
  letter-spacing: -.5px;
}

/* taskbar */
.taskbar {
  height: 32px;
  background: #1a292b;
  display: flex;
  color: #fff;
}
.task {
  width: 39.1px;
  display: flex;
  align-items: center;
  justify-content: center;
}
.task svg {
  width: 20px;
  height: 20px;
}
.task.active {
  background: #465456;
  border-bottom: 2px solid #6caae0;
}
.task.open {
  border-bottom: 2px solid #6caae0;
}
.tray {
  margin-left: auto;
  padding-right: 10px;
  display: flex;
  align-items: center;
  font-size: 11px;
  white-space: nowrap;
}
.weather {
  width: 20px;
  height: 20px;
  margin-right: 6px;
}
.temp {
  width: 31px;
}
.sky {
  width: 83px;
  letter-spacing: -.25px;
}
.tray-icons {
  width: 115px;
  height: 20px;
}
.datetime {
  width: 52px;
  display: flex;
  flex-direction: column;
  align-items: center;
  font-size: 9.5px;
  line-height: 14.5px;
  letter-spacing: -.4px;
}
.notify {
  width: 28px;
  height: 24px;
  margin-left: 3px;
  margin-right: 2px;
}
.notify-count {
  font-size: 9px;
  fill: #fff;
}
```
